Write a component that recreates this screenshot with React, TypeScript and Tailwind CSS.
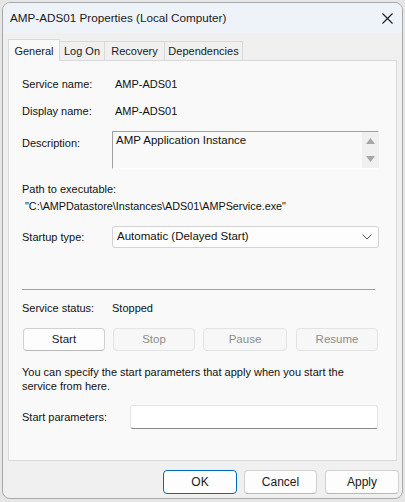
import React from "react";

const font = { fontFamily: '"Liberation Sans", Arial, sans-serif' };

function Btn({ children, w, className = "", disabled = false }: { children: React.ReactNode; w: string; className?: string; disabled?: boolean }) {
  return (
    <div
      className={`${w} h-[23px] flex items-center justify-center rounded-[4px] border text-[11.5px] ${
        disabled
          ? "border-[#e3e3e3] bg-[#f7f7f7] text-[#8c8c8c]"
          : "border-[#d0d0d0] border-b-[#b8b8b8] bg-[#fdfdfd] text-[#1a1a1a]"
      } ${className}`}
    >
      {children}
    </div>
  );
}

export default function App() {
  return (
    <div className="w-[405px] h-[502px] bg-[#e6e6e6] pt-[2px] pl-[2px] overflow-hidden" style={font}>
      <div className="w-[401px] h-[497px] rounded-[8px] border border-[#a9a9a9] overflow-hidden bg-[#f0f0f0] flex flex-col text-black">
        {/* Title bar */}
        <div className="h-[30px] shrink-0 bg-[#eef2f9] flex items-center pl-[7px] pr-[9px]">
          <span className="text-[11.7px] text-[#1a1a1a] flex-1">AMP-ADS01 Properties (Local Computer)</span>
          <svg width="11" height="11" viewBox="0 0 11 11" className="mt-[1px]">
            <path d="M0.5 0.5 L10.5 10.5 M10.5 0.5 L0.5 10.5" stroke="#1a1a1a" strokeWidth="1.1" fill="none" />
          </svg>
        </div>

        {/* Tabs */}
        <div className="mt-[6px] ml-[5px] flex items-end relative z-10 text-[11px] text-[#1a1a1a]">
          <div className="h-[22px] w-[52px] border-l border-t border-r border-[#d9d9d9] bg-[#f9f9f9] flex items-start pt-[3px] justify-center -mb-px">
            General
          </div>
          <div className="h-[19px] w-[45px] border-t border-r border-[#d9d9d9] bg-[#f0f0f0] flex items-center justify-center pt-[1px]">
            Log On
          </div>
          <div className="h-[19px] w-[60px] border-t border-r border-[#d9d9d9] bg-[#f0f0f0] flex items-center justify-center pt-[1px]">
            Recovery
          </div>
          <div className="h-[19px] w-[78px] border-t border-r border-[#d9d9d9] bg-[#f0f0f0] flex items-center justify-center pt-[1px]">
            Dependencies
          </div>
        </div>

        {/* Panel */}
        <div className="ml-[5px] w-[389px] h-[401px] shrink-0 border border-[#d9d9d9] bg-[#f9f9f9] flex flex-col pl-[13px] text-[11px] text-[#111]">
          <div className="mt-[15px] h-[16px] flex items-center">
            <span className="w-[90px]">Service name:</span>
            <span className="pl-[3px]">AMP-ADS01</span>
          </div>
          <div className="mt-[11px] h-[16px] flex items-center">
            <span className="w-[90px]">Display name:</span>
            <span className="pl-[3px]">AMP-ADS01</span>
          </div>
          <div className="mt-[12px] flex items-start">
            <span className="w-[90px] pt-[4px] leading-[16px]">Description:</span>
            <div className="w-[267px] h-[38px] border-t border-l border-[#a0a0a0] border-r border-r-[#f0f0f0] border-b border-b-[#ffffff] bg-[#f9f9f9] flex">
              <div className="flex-1 pl-[3px] pt-[1px] leading-[14px] text-[11.5px]">AMP Application Instance</div>
              <div className="w-[16px] bg-[#f0f0f0] flex flex-col items-center justify-between py-[6px]">
                <svg width="9" height="6" viewBox="0 0 9 6"><path d="M4.5 0 L9 6 L0 6 Z" fill="#a6a6a6" /></svg>
                <svg width="9" height="6" viewBox="0 0 9 6"><path d="M0 0 L9 0 L4.5 6 Z" fill="#a6a6a6" /></svg>
              </div>
            </div>
          </div>
          <div className="mt-[12px] h-[16px] flex items-center">Path to executable:</div>
          <div className="mt-[1px] h-[16px] flex items-center pl-[3px] text-[10.8px]">"C:\AMPDatastore\Instances\ADS01\AMPService.exe"</div>
          <div className="mt-[12px] flex items-center">
            <span className="w-[90px]">Startup type:</span>
            <div className="w-[267px] h-[22px] rounded-[3px] border border-[#d3d3d3] bg-[#fdfdfd] flex items-center pl-[4px] pr-[6px] text-[11.5px]">
              <span className="flex-1">Automatic (Delayed Start)</span>
              <svg width="10" height="6" viewBox="0 0 10 6"><path d="M0.5 0.5 L5 5 L9.5 0.5" stroke="#555" strokeWidth="1" fill="none" /></svg>
            </div>
          </div>
          <div className="mt-[41px] w-[353px] h-px bg-[#a0a0a0]" />
          <div className="mt-[10px] h-[16px] flex items-center">
            <span className="w-[90px]">Service status:</span>
            <span>Stopped</span>
          </div>
          <div className="mt-[12px] flex items-center">
            <Btn w="w-[82px]" className="ml-[1px]">Start</Btn>
            <Btn w="w-[82px]" className="ml-[8px]" disabled>Stop</Btn>
            <Btn w="w-[84px]" className="ml-[8px]" disabled>Pause</Btn>
            <Btn w="w-[82px]" className="ml-[9px]" disabled>Resume</Btn>
          </div>
          <div className="mt-[14px] leading-[14px]">
            You can specify the start parameters that apply when you start the
            <br />
            service from here.
          </div>
          <div className="mt-[12px] flex items-center">
            <span className="w-[108px]">Start parameters:</span>
            <div className="w-[248px] h-[24px] rounded-[3px] border border-[#e5e5e5] border-b-[#878787] bg-white" />
          </div>
        </div>

        {/* Bottom buttons */}
        <div className="mt-[9px] flex items-center pl-[160px] text-[12px] text-[#1a1a1a]">
          <div className="w-[74px] h-[24px] rounded-[4px] border border-[#0067c0] bg-[#fdfdfd] flex items-center justify-center">OK</div>
          <div className="ml-[7px] w-[73px] h-[24px] rounded-[4px] border border-[#d0d0d0] border-b-[#b8b8b8] bg-[#fdfdfd] flex items-center justify-center">Cancel</div>
          <div className="ml-[8px] w-[74px] h-[24px] rounded-[4px] border border-[#d0d0d0] border-b-[#b8b8b8] bg-[#fdfdfd] flex items-center justify-center">Apply</div>
        </div>
      </div>
    </div>
  );
}
